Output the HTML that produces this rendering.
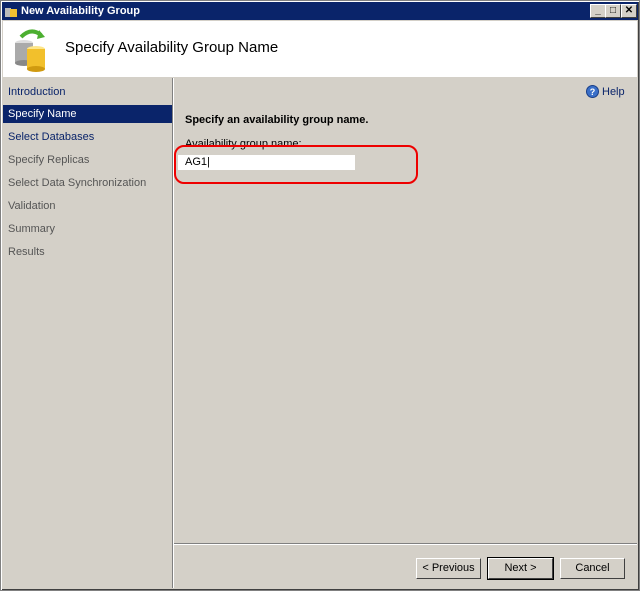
<!DOCTYPE html>
<html><head><style>
*{margin:0;padding:0;box-sizing:border-box}
body{width:640px;height:591px;background:#d4d0c8;font-family:"Liberation Sans",sans-serif;font-size:11px;position:relative;overflow:hidden;color:#000}
.frame{position:absolute;left:0;top:0;width:640px;height:591px;border:1px solid #808080;box-shadow:inset 1px 1px #fff,inset -1px -1px #404040}
.title{position:absolute;left:2px;top:2px;width:636px;height:18px;background:#0a246a;color:#fff;font-weight:bold;font-size:11px;line-height:18px;padding-left:19px}
.tb{position:absolute;top:4px;width:16px;height:14px;background:#d4d0c8;border:1px solid;border-color:#fff #404040 #404040 #fff;font-size:10px;line-height:12px;text-align:center;color:#000;font-weight:bold}
.header{position:absolute;left:3px;top:21px;width:634px;height:56px;background:#fff}
.header h1{position:absolute;left:62px;top:18px;font-size:15px;font-weight:normal}
.nav{position:absolute;left:3px;top:78px;width:169px;height:510px;background:#d4d0c8}
.nav div{position:absolute;left:0;width:169px;height:18px;line-height:18px;padding-left:5px}
.sep{position:absolute;left:172px;top:78px;height:510px;border-left:1px solid #808080;background:#fff;width:2px}
.btn{position:absolute;top:558px;width:65px;height:21px;border:1px solid;border-color:#fff #404040 #404040 #fff;text-align:center;line-height:19px;background:#d4d0c8}
</style></head><body>
<div class="frame"></div>
<div class="title">New Availability Group</div>
<svg style="position:absolute;left:4px;top:4px" width="14" height="14"><rect x="1" y="4" width="6" height="9" fill="#bbb"/><rect x="6" y="5" width="7" height="8" fill="#f0c030"/></svg>
<div class="tb" style="left:590px">_</div><div class="tb" style="left:605px">□</div><div class="tb" style="left:621px">✕</div>
<div class="header"><svg style="position:absolute;left:10px;top:6px" width="40" height="46">
<path d="M8 10 Q18 0 28 8" stroke="#4caf30" stroke-width="4" fill="none"/><path d="M26 3 L32 10 L24 12Z" fill="#4caf30"/>
<ellipse cx="11" cy="16" rx="9" ry="3" fill="#ddd"/><rect x="2" y="16" width="18" height="20" fill="#aaa"/><ellipse cx="11" cy="36" rx="9" ry="3" fill="#888"/>
<ellipse cx="23" cy="22" rx="9" ry="3" fill="#fde68a"/><rect x="14" y="22" width="18" height="20" fill="#f2c02c"/><ellipse cx="23" cy="42" rx="9" ry="3" fill="#d09a10"/></svg>
<h1>Specify Availability Group Name</h1></div>
<div class="nav">
<div style="top:5px;color:#0a246a">Introduction</div>
<div style="top:27px;background:#0a246a;color:#fff">Specify Name</div>
<div style="top:50px;color:#0a246a">Select Databases</div>
<div style="top:73px;color:#555">Specify Replicas</div>
<div style="top:96px;color:#555">Select Data Synchronization</div>
<div style="top:119px;color:#555">Validation</div>
<div style="top:142px;color:#555">Summary</div>
<div style="top:165px;color:#555">Results</div>
</div>
<div class="sep"></div>
<svg style="position:absolute;left:586px;top:85px" width="13" height="13"><circle cx="6.5" cy="6.5" r="6" fill="#3a6fc8" stroke="#1a3f88"/><text x="6.5" y="10" font-size="9" fill="#fff" text-anchor="middle" font-weight="bold" font-family="Liberation Sans">?</text></svg>
<div style="position:absolute;left:602px;top:86px;color:#0a246a">Help</div>
<div style="position:absolute;left:185px;top:114px;font-weight:bold">Specify an availability group name.</div>
<div style="position:absolute;left:185px;top:138px">Availability group name:</div>
<div style="position:absolute;left:178px;top:155px;width:177px;height:15px;background:#fff;padding-left:7px;line-height:15px">AG1|</div>
<div style="position:absolute;left:174px;top:145px;width:244px;height:39px;border:2px solid #e00;border-radius:10px"></div>
<div style="position:absolute;left:174px;top:543px;width:463px;height:2px;border-top:1px solid #808080;border-bottom:1px solid #fff"></div>
<div class="btn" style="left:416px">&lt; Previous</div>
<div class="btn" style="left:488px;outline:1px solid #000">Next &gt;</div>
<div class="btn" style="left:560px">Cancel</div>
</body></html>
